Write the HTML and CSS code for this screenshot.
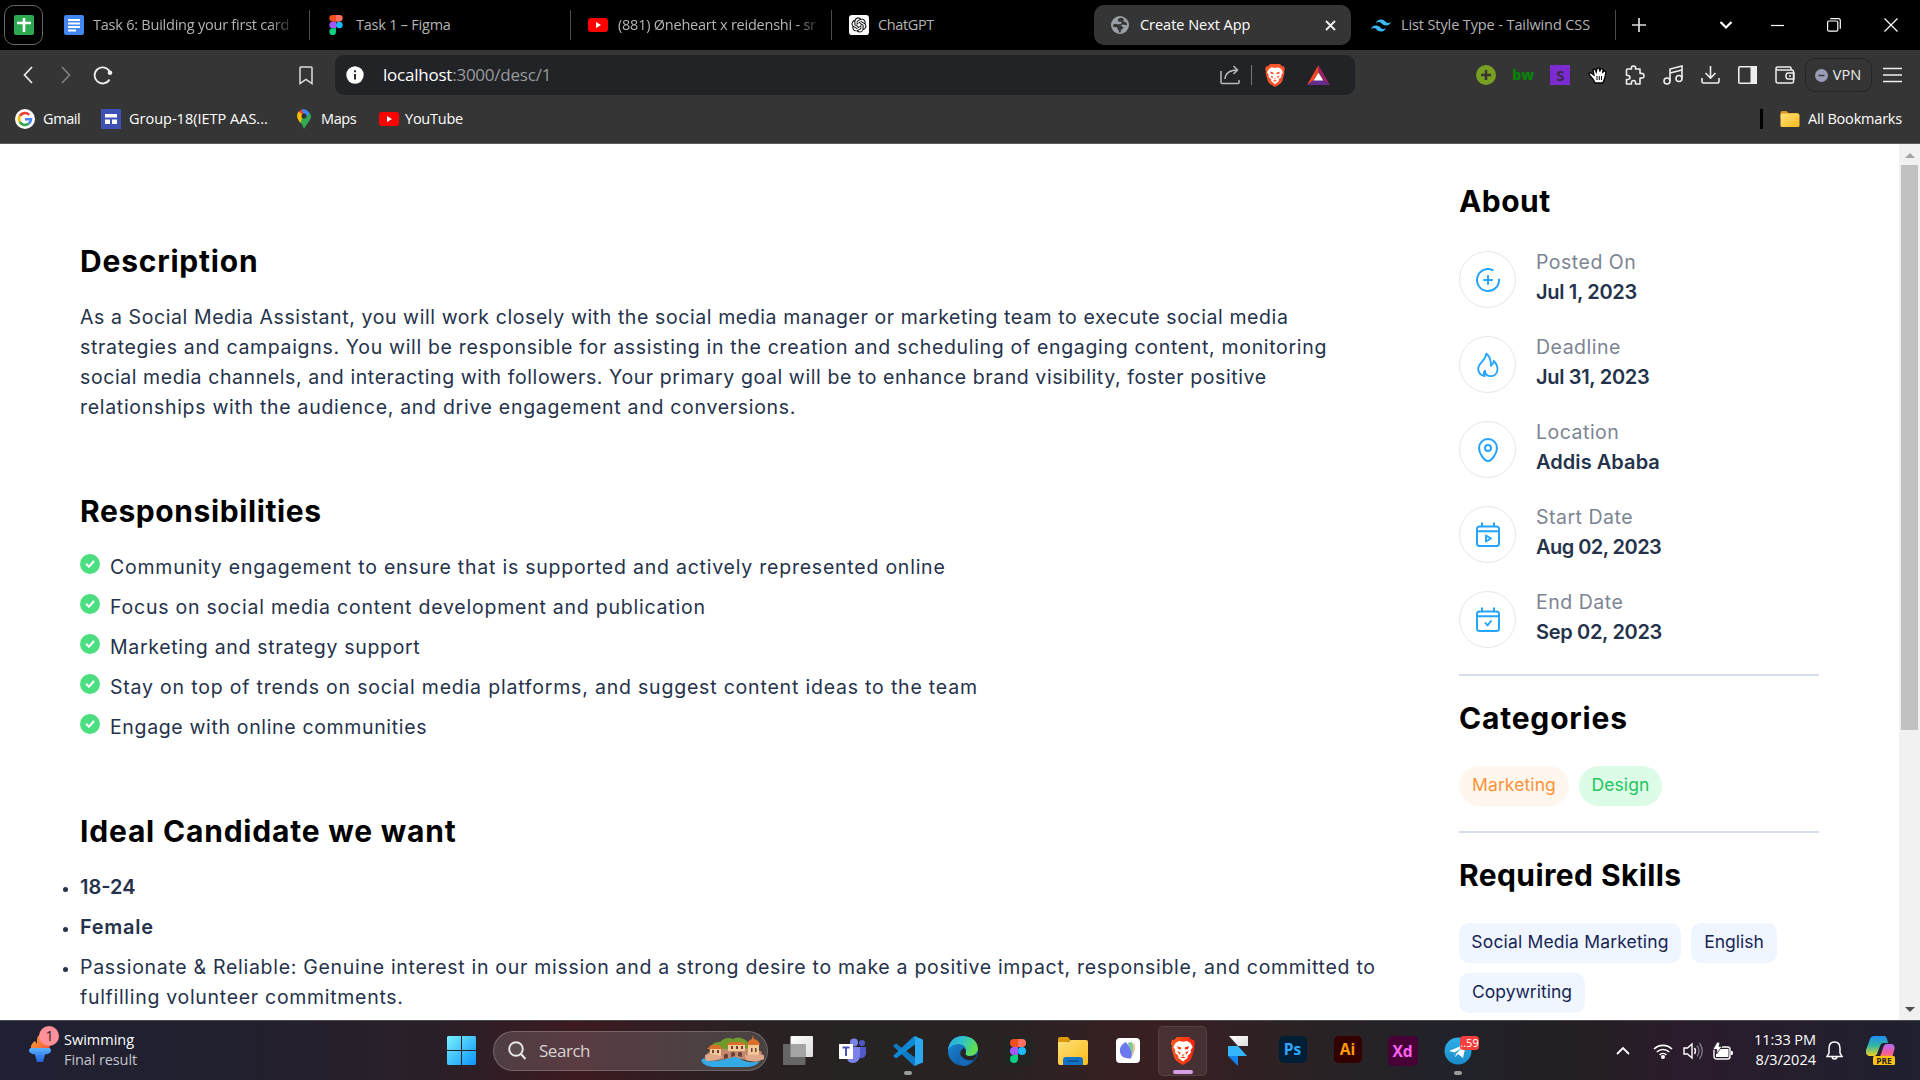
FILE: index.html
```html
<!DOCTYPE html>
<html lang="en">
<head>
<meta charset="utf-8">
<title>Create Next App</title>
<link rel="stylesheet" href="styles.css">
</head>
<body>
<svg class="defs" width="0" height="0" aria-hidden="true">
  <defs>
    <linearGradient id="fire" x1="0" y1="0" x2="1" y2="1"><stop offset="0" stop-color="#ffb52e"/><stop offset="1" stop-color="#f2503f"/></linearGradient>
    <linearGradient id="torch" x1="0" y1="0" x2="0" y2="1"><stop offset="0" stop-color="#5bb4ff"/><stop offset="1" stop-color="#1f5fe0"/></linearGradient>
    <linearGradient id="win" x1="0" y1="0" x2="1" y2="1"><stop offset="0" stop-color="#7af0ff"/><stop offset="1" stop-color="#0a94f8"/></linearGradient>
    <linearGradient id="pane" x1="0" y1="0" x2="1" y2="1"><stop offset="0" stop-color="#fff"/><stop offset="1" stop-color="#dcdcdc"/></linearGradient>
    <linearGradient id="edgeTop" x1="0" y1="0" x2="1" y2="0.4"><stop offset="0" stop-color="#28a8e8"/><stop offset=".5" stop-color="#2fc2c8"/><stop offset="1" stop-color="#5ee04f"/></linearGradient>
    <linearGradient id="edgeLow" x1="0" y1="0" x2="1" y2="1"><stop offset="0" stop-color="#1b8ddb"/><stop offset="1" stop-color="#0c4a94"/></linearGradient>
    <linearGradient id="folder" x1="0" y1="0" x2="1" y2="1"><stop offset="0" stop-color="#ffe07a"/><stop offset="1" stop-color="#fbbc1a"/></linearGradient>
    <linearGradient id="lion" x1="0" y1="0" x2="1" y2="0"><stop offset="0" stop-color="#ff5a1f"/><stop offset="1" stop-color="#f5200f"/></linearGradient>
    <linearGradient id="tele" x1="0" y1="0" x2="0" y2="1"><stop offset="0" stop-color="#2fb0e8"/><stop offset="1" stop-color="#1a8ac8"/></linearGradient>
    <linearGradient id="copA" x1="0" y1="0" x2="0" y2="1"><stop offset="0" stop-color="#1f8cf5"/><stop offset=".5" stop-color="#34b8a0"/><stop offset="1" stop-color="#f2d21f"/></linearGradient>
    <linearGradient id="copB" x1="0" y1="0" x2="0" y2="1"><stop offset="0" stop-color="#b26cf5"/><stop offset=".6" stop-color="#f05aa0"/><stop offset="1" stop-color="#ff8a4a"/></linearGradient>
    <symbol id="brave" viewBox="0 0 24 28">
      <path d="M6 0h12l3 3 2-.3 1 4-1 2.300 .5 2L21 20q-1 3-4 5l-5 3-5-3q-3-2-4-5L.5 11 1 9 0 6.700l1-4L3 3z"/>
      <path fill="#fff" d="M12 4.800l4-.8 3.500 2 2.200 4-2 3 .3 2.500-3.500 3.500 .2 1.800L12 24.500l-4.700-3.700 .2-1.800L4 15.500l.3-2.500-2-3 2.200-4L8 4z"/>
      <path d="M6 9.300l4 .9.300 2.200-3.400-.4zM18 9.300l-4 .9-.3 2.200 3.400-.4zM6.300 14l3.500 1.500-1.300 2.200zM17.700 14l-3.500 1.500 1.300 2.200zM10.200 17.500h3.600L12 18.900zM9 20.600l3-1.100 3 1.100-3 .6z"/>
    </symbol>
    <symbol id="figma" viewBox="0 0 14 21">
      <path fill="#f24e1e" d="M7 0v7H3.500a3.500 3.500 0 0 1 0-7z"/><path fill="#ff7262" d="M7 0h3.500a3.500 3.500 0 0 1 0 7H7z"/>
      <path fill="#a259ff" d="M7 7v7H3.500a3.500 3.500 0 0 1 0-7z"/><circle fill="#1abcfe" cx="10.500" cy="10.500" r="3.500"/><path fill="#0acf83" d="M7 14v3.500A3.500 3.500 0 1 1 3.500 14z"/>
    </symbol>
    <symbol id="youtube" viewBox="0 0 20 14"><rect width="20" height="14" rx="3" fill="#f00"/><path fill="#fff" d="M8 4l5 3-5 3z"/></symbol>
    <symbol id="check" viewBox="0 0 20 20"><circle cx="10" cy="10" r="10" fill="#4bde80"/><path d="M6.500 10.300l2.500 2.500 4.500-5.300" fill="none" stroke="#fff" stroke-width="2" stroke-linecap="round" stroke-linejoin="round"/></symbol>
  </defs>
</svg>

<header class="browser">
  <div class="tabs">
    <div class="pinned"><svg width="20" height="20" viewBox="0 0 20 20"><rect width="20" height="20" rx="2" fill="#2da94f"/><path d="M10 3v14M3 8h14" stroke="#fff" stroke-width="2.600"/></svg></div>
    <div class="tab tab-docs">
      <svg width="20" height="20" viewBox="0 0 20 20"><rect width="20" height="20" rx="2" fill="#4285f4"/><path d="M4 5h12M4 8.500h12M4 12h12M4 15.500h8" stroke="#fff" stroke-width="1.800"/></svg>
      <span class="tab-title fade">Task 6: Building your first card</span>
    </div>
    <div class="tab tab-figma"><svg width="14" height="20"><use href="#figma"/></svg><span class="tab-title">Task 1 – Figma</span></div>
    <div class="tab tab-yt"><svg width="20" height="14"><use href="#youtube"/></svg><span class="tab-title fade">(881) Øneheart x reidenshi - sr</span></div>
    <div class="tab tab-gpt">
      <svg width="20" height="20" viewBox="-4 -4 32 32"><rect x="-4" y="-4" width="32" height="32" rx="5" fill="#fff"/><path d="M22.2819 9.8211a5.9847 5.9847 0 0 0-.5157-4.9108 6.0462 6.0462 0 0 0-6.5098-2.9A6.0651 6.0651 0 0 0 4.9807 4.1818a5.9847 5.9847 0 0 0-3.9977 2.9 6.0462 6.0462 0 0 0 .7427 7.0966 5.98 5.98 0 0 0 .511 4.9107 6.051 6.051 0 0 0 6.5146 2.9001A5.9847 5.9847 0 0 0 13.2599 24a6.0557 6.0557 0 0 0 5.7718-4.2058 5.9894 5.9894 0 0 0 3.9977-2.9001 6.0557 6.0557 0 0 0-.7475-7.0729zm-9.022 12.6081a4.4755 4.4755 0 0 1-2.8764-1.0408l.1419-.0804 4.7783-2.7582a.7948.7948 0 0 0 .3927-.6813v-6.7369l2.02 1.1686a.071.071 0 0 1 .038.052v5.5826a4.504 4.504 0 0 1-4.4945 4.4944zm-9.6607-4.1254a4.4708 4.4708 0 0 1-.5346-3.0137l.142.0852 4.783 2.7582a.7712.7712 0 0 0 .7806 0l5.8428-3.3685v2.3324a.0804.0804 0 0 1-.0332.0615L9.74 19.9502a4.4992 4.4992 0 0 1-6.1408-1.6464zM2.3408 7.8956a4.485 4.485 0 0 1 2.3655-1.9728V11.6a.7664.7664 0 0 0 .3879.6765l5.8144 3.3543-2.0201 1.1685a.0757.0757 0 0 1-.071 0l-4.8303-2.7865A4.504 4.504 0 0 1 2.3408 7.872zm16.5963 3.8558L13.1038 8.364 15.1192 7.2a.0757.0757 0 0 1 .071 0l4.8303 2.7913a4.4944 4.4944 0 0 1-.6765 8.1042v-5.6772a.79.79 0 0 0-.407-.667zm2.0107-3.0231l-.142-.0852-4.7735-2.7818a.7759.7759 0 0 0-.7854 0L9.409 9.2297V6.8974a.0662.0662 0 0 1 .0284-.0615l4.8303-2.7866a4.4992 4.4992 0 0 1 6.6802 4.66zM8.3065 12.863l-2.02-1.1638a.0804.0804 0 0 1-.038-.0567V6.0742a4.4992 4.4992 0 0 1 7.3757-3.4537l-.142.0805L8.704 5.459a.7948.7948 0 0 0-.3927.6813zm1.0976-2.3654l2.602-1.4998 2.6069 1.4998v2.9994l-2.5974 1.4997-2.6067-1.4997Z"/></svg>
      <span class="tab-title tight">ChatGPT</span>
    </div>
    <div class="tab tab-active">
      <svg width="18" height="18" viewBox="0 0 18 18"><circle cx="9" cy="9" r="9" fill="#9aa0a6"/><path fill="#353535" d="M10.500 1.800Q7 2 6.800 4.500q.2 1.500 2.200 1.300l1.700.2q-.2 2-1.500 2.200-1.200.2-2.700 0-2-1.200-4.700.8.200 1.500.8 2.300 2-.5 3.400.2.800.8.800 2.200l1 .3v2.300q1.200.2 2.200 0l-.3-1.500q1-2 2.300-2.300l.5-1.500Q11 10.500 10 9.700q1-1.500 2.500-1.200 1.800.8 3.700.5-.5-2-1.300-3.200-1.500.5-2.500-.8 0-1.200.6-1.800-1.200-1-2.500-1.400z"/></svg>
      <span class="tab-title on">Create Next App</span>
      <svg class="close" width="11" height="11" viewBox="0 0 11 11"><path d="M1 1l9 9M10 1l-9 9" stroke="#eee" stroke-width="1.900"/></svg>
    </div>
    <div class="tab tab-tw">
      <svg width="20" height="13" viewBox="0 4.800 24 14.400"><path fill="#38bdf8" d="M12.001 4.800c-3.200 0-5.200 1.600-6 4.800 1.200-1.600 2.600-2.200 4.200-1.800.913.228 1.565.89 2.288 1.624C13.666 10.618 15.027 12 18.001 12c3.200 0 5.200-1.600 6-4.800-1.200 1.600-2.600 2.200-4.200 1.800-.913-.228-1.565-.89-2.288-1.624C16.337 6.182 14.976 4.800 12.001 4.800zm-6 7.200c-3.200 0-5.200 1.600-6 4.800 1.200-1.600 2.600-2.200 4.200-1.800.913.228 1.565.89 2.288 1.624 1.177 1.194 2.538 2.576 5.512 2.576 3.200 0 5.200-1.600 6-4.800-1.200 1.600-2.600 2.200-4.200 1.800-.913-.228-1.565-.89-2.288-1.624C10.337 13.382 8.976 12 6.001 12z"/></svg>
      <span class="tab-title tw">List Style Type - Tailwind CSS</span>
    </div>
    <svg class="new-tab" width="14" height="14" viewBox="0 0 14 14"><path d="M7 0v14M0 7h14" stroke="#ddd" stroke-width="1.700"/></svg>
    <svg class="tab-menu" width="14" height="10" viewBox="0 0 14 10"><path d="M1.500 2L7 7.500 12.500 2" fill="none" stroke="#fff" stroke-width="2.200"/></svg>
    <svg class="win-min" width="13" height="13" viewBox="0 0 13 13"><path d="M0 6.500h13" stroke="#fff" stroke-width="1.200"/></svg>
    <svg class="win-max" width="14" height="14" viewBox="0 0 14 14" fill="none" stroke="#fff" stroke-width="1.200"><rect x=".6" y="3" width="10.200" height="10.200" rx="1.500"/><path d="M3.300 .7h8q2 0 2 2v8"/></svg>
    <svg class="win-close" width="14" height="14" viewBox="0 0 14 14"><path d="M.5 .5l13 13M13.500 .5l-13 13" stroke="#fff" stroke-width="1.200"/></svg>
  </div>

  <div class="toolbar">
    <svg class="nav-back" width="10" height="18" viewBox="0 0 10 18"><path d="M9 1L1.500 9 9 17" fill="none" stroke="#eee" stroke-width="1.700"/></svg>
    <svg class="nav-fwd" width="10" height="18" viewBox="0 0 10 18"><path d="M1 1l7.500 8L1 17" fill="none" stroke="#858585" stroke-width="1.500"/></svg>
    <svg class="nav-reload" width="20" height="19" viewBox="0 0 20 19"><path d="M16.500 13.500A8 8 0 1 1 16.800 6" fill="none" stroke="#eee" stroke-width="1.800"/><circle cx="17" cy="6.800" r="2.300" fill="#eee"/></svg>
    <svg class="nav-mark" width="14" height="19" viewBox="0 0 14 19"><path d="M1 1.800q0-.8.800-.8h10.400q.8 0 .8.800V17.500l-6-4.200-6 4.200z" fill="none" stroke="#ddd" stroke-width="1.500"/></svg>
    <div class="urlbar">
      <svg width="18" height="18" viewBox="0 0 18 18"><circle cx="9" cy="9" r="8.700" fill="#fff"/><path d="M9 8v5.500M9 4.300v2" stroke="#222327" stroke-width="1.900"/></svg>
      <span class="url"><b>localhost</b>:3000/desc/1</span>
      <svg class="share" width="20" height="20" viewBox="0 0 20 20" fill="none" stroke="#bbb" stroke-width="1.500"><path d="M1 6v11.500q0 1 1 1h16q1 0 1-1V15M5 14q.5-8.500 12-9M13.500 1l4 4-4 4"/></svg>
      <i class="url-sep"></i>
      <svg class="url-lion" width="20" height="23" fill="#fb542b"><use href="#brave"/></svg>
      <svg class="url-bat" width="23" height="20" viewBox="0 0 23 20"><path fill="#ff4724" d="M11.500 0L0 20l7-5 4.500-8z"/><path fill="#9e1f63" d="M11.500 0L23 20l-7-5-4.500-8z"/><path fill="#662d91" d="M0 20h23l-7-5H7z"/><path fill="#fff" d="M11.500 7.500l4.800 8H6.700z"/></svg>
    </div>
    <div class="extensions">
      <span><svg width="20" height="20" viewBox="0 0 20 20"><circle cx="10" cy="10" r="10" fill="#799f22"/><path d="M10 5v10M5 10h10" stroke="#353535" stroke-width="2.500"/></svg></span>
      <span class="bw">bw</span>
      <span><em class="s-box">S</em></span>
      <span><svg width="20" height="17" viewBox="0 0 20 17"><path fill="#fff" stroke="#000" stroke-width="1.300" d="M7 16l-2-4-4-4.500Q.8 5.500 3 6l3 2-1-5q1.300-1.600 2.400 0l.8 2L9 1.500q1.600-1.300 2.400.3l.4 2.700 1-2.700q1.600-.8 2.200.8l-.2 2.600 1.400-1.200q1.700 0 1.600 1.600l-1 5.400-2 5z"/><path d="M9 9v4M11.300 9v4M13.500 9v4" stroke="#000"/></svg></span>
      <span><svg width="20" height="20" viewBox="0 0 20 20"><path d="M2 4h4.500q-.7-3 2-3t2 3H15v4.500q4-.7 4 2.300t-4 2.200V19h-4.500q.5-3.500-2-3.500T6.500 19H1.500v-4.500q3.500.3 3.500-2t-3.500-2.300V5z" fill="none" stroke="#eee" stroke-width="1.600" stroke-linejoin="round"/></svg></span>
      <span><svg width="20" height="20" viewBox="0 0 20 20" fill="none" stroke="#eee" stroke-width="1.600"><path d="M7 16V4l12-3v12.500M7 8l12-3"/><circle cx="4" cy="16" r="3"/><circle cx="16" cy="13.500" r="3"/></svg></span>
      <span><svg width="19" height="18" viewBox="0 0 19 18" fill="none" stroke="#eee" stroke-width="1.600"><path d="M9.500 0v12M4.500 7l5 5 5-5M1 12v3.500q0 1.500 1.500 1.500h14q1.500 0 1.500-1.500V12"/></svg></span>
      <span><svg width="19" height="18" viewBox="0 0 19 18"><rect x=".8" y=".8" width="17.400" height="16.400" rx="1" fill="none" stroke="#eee" stroke-width="1.600"/><path fill="#eee" d="M12.500 0H19v18h-6.500z"/></svg></span>
      <span><svg width="20" height="18" viewBox="0 0 20 18" fill="none" stroke="#eee" stroke-width="1.500"><path d="M16 4V2q0-1-1-1H3Q1 1 1 2.500T3 4h14q1.500 0 1.500 1.500V16q0 1-1.500 1H3q-2 0-2-2V2.500M19 7h-6q-2 0-2 3t2 3h6zM14 10h2"/></svg></span>
    </div>
    <div class="vpn"><svg width="13" height="13" viewBox="0 0 13 13"><circle cx="6.500" cy="6.500" r="6.500" fill="#9a9db5"/><path d="M3.500 6.500h6" stroke="#353535" stroke-width="1.400"/></svg>VPN</div>
    <svg class="menu" width="19" height="16" viewBox="0 0 19 16"><path d="M0 1.500h19M0 8h19M0 14.500h19" stroke="#eee" stroke-width="1.600"/></svg>
  </div>

  <div class="bookmarks">
    <svg class="bm-gmail" width="20" height="20" viewBox="0 0 20 20"><circle cx="10" cy="10" r="10" fill="#fff"/><g fill="none" stroke-width="2.600"><path stroke="#ea4335" d="M14.200 5.800A6 6 0 0 0 4.800 7"/><path stroke="#fbbc05" d="M4.800 7a6 6 0 0 0 0 6"/><path stroke="#34a853" d="M4.800 13a6 6 0 0 0 9 1.600"/><path stroke="#4285f4" d="M13.800 14.600A6 6 0 0 0 16 10.200h-6"/></g></svg>
    <span class="bm-t1">Gmail</span>
    <svg class="bm-group" width="20" height="20" viewBox="0 0 20 20"><path fill="#3f51b5" d="M0 0h20v20H0z"/><path fill="#fff" d="M4 5h12v3.500H4zM4 10.500h5V15H4zM11 10.500h5V15h-5z"/></svg>
    <span class="bm-t2">Group-18(IETP AAS...</span>
    <svg class="bm-maps" width="14" height="20" viewBox="0 0 14 20"><path fill="#34a853" d="M1.500 11L12.700 4q1.300 2 1.300 4-.5 3-3.500 6.500Q8.500 17 7 20 6 17 4.500 15z"/><path fill="#4285f4" d="M4.500 .5Q9 -1 12.700 4L8 9z"/><path fill="#ea4335" d="M1.800 2.500L4.500 .5 7 5 3 8.500z"/><path fill="#fbbc04" d="M1.800 2.500L6 6 3.500 14Q0 9.500 0 7q0-3 1.800-4.500z"/><circle cx="7" cy="7" r="2.500" fill="#2b3137"/></svg>
    <span class="bm-t3">Maps</span>
    <svg class="bm-yt" width="20" height="14"><use href="#youtube"/></svg>
    <span class="bm-t4">YouTube</span>
    <i class="bm-sep"></i>
    <svg class="bm-folder" width="20" height="16" viewBox="0 0 20 16"><path fill="#d9981c" d="M.5 1.500Q.5 0 2 0h4.500L8.500 2H18v5H.5z"/><rect x=".5" y="2.500" width="19" height="13.500" rx="1.500" fill="url(#folder)"/></svg>
    <span class="bm-t5">All Bookmarks</span>
  </div>
</header>

<div class="viewport">
  <main class="content">
    <h2>Description</h2>
    <p>
      <span class="ls-58">As a Social Media Assistant, you will work closely with the social media manager or marketing team to execute social media</span><br>
      <span class="ls-68">strategies and campaigns. You will be responsible for assisting in the creation and scheduling of engaging content, monitoring</span><br>
      <span class="ls-58">social media channels, and interacting with followers. Your primary goal will be to enhance brand visibility, foster positive</span><br>
      <span class="ls-70">relationships with the audience, and drive engagement and conversions.</span>
    </p>
    <h2 class="resp">Responsibilities</h2>
    <ul class="checks">
      <li><svg width="20" height="20"><use href="#check"/></svg><span class="ls-76">Community engagement to ensure that is supported and actively represented online</span></li>
      <li><svg width="20" height="20"><use href="#check"/></svg><span class="ls-76">Focus on social media content development and publication</span></li>
      <li><svg width="20" height="20"><use href="#check"/></svg><span class="ls-68">Marketing and strategy support</span></li>
      <li><svg width="20" height="20"><use href="#check"/></svg><span class="ls-79">Stay on top of trends on social media platforms, and suggest content ideas to the team</span></li>
      <li><svg width="20" height="20"><use href="#check"/></svg><span class="ls-62">Engage with online communities</span></li>
    </ul>
    <h2 class="ideal">Ideal Candidate we want</h2>
    <ul class="bullets">
      <li><strong class="range">18-24</strong></li>
      <li><strong>Female</strong></li>
      <li><span class="ls-70">Passionate &amp; Reliable: Genuine interest in our mission and a strong desire to make a positive impact, responsible, and committed to<br>fulfilling volunteer commitments.</span></li>
    </ul>
  </main>

  <aside class="sidebar">
    <h2 class="snug">About</h2>
    <dl class="facts">
      <div><i class="ring"><svg viewBox="0 0 24 24"><path d="M16.500 2A11 11 0 1 0 23 11.500"/><path d="M12 8v8M8 12h8"/></svg></i><div><dt>Posted On</dt><dd>Jul 1, 2023</dd></div></div>
      <div><i class="ring"><svg viewBox="0 0 24 28"><path d="M8.500 26C4 25.200 1.500 21.700 1.500 17.700c0-6 8.500-8.500 8.500-16 3.500 2.500 5.500 6 5 13.300 2.200-1.300 3-3.300 3.200-5.300 3 3 4.300 6.500 4 9.800-.5 4.200-4 6.700-8 6.500-3.500-.3-5.500-2.800-5.500-6-1.500 2-1.200 4.500-.2 6z"/></svg></i><div><dt>Deadline</dt><dd>Jul 31, 2023</dd></div></div>
      <div><i class="ring"><svg viewBox="0 0 24 24"><path d="M12 23c-3.500 0-9-7.500-9-13a9 9 0 0 1 18 0c0 5.500-5.500 13-9 13z"/><circle cx="12" cy="10" r="3"/></svg></i><div><dt>Location</dt><dd class="plain">Addis Ababa</dd></div></div>
      <div><i class="ring"><svg viewBox="0 0 24 24"><rect x="1" y="3.500" width="22" height="19.500" rx="2.500"/><path d="M1 8.300h22M6 .2v3M18 .2v3M10 12.500v6l5-3z"/></svg></i><div><dt>Start Date</dt><dd class="date">Aug 02, 2023</dd></div></div>
      <div><i class="ring"><svg viewBox="0 0 24 24"><rect x="1" y="3.500" width="22" height="19.500" rx="2.500"/><path d="M1 8.300h22M6 .2v3M18 .2v3M9.500 15l2 2.500 3.500-4.500"/></svg></i><div><dt>End Date</dt><dd>Sep 02, 2023</dd></div></div>
    </dl>
    <hr>
    <h2>Categories</h2>
    <div class="pills">
      <span class="cat orange">Marketing</span><span class="cat green">Design</span>
    </div>
    <hr>
    <h2 class="skills">Required Skills</h2>
    <div class="pills">
      <span class="skill smm">Social Media Marketing</span><span class="skill eng">English</span><span class="skill copy">Copywriting</span>
    </div>
  </aside>

  <div class="scrollbar"><i class="arrow up"></i><i class="thumb"></i><i class="arrow down"></i></div>
</div>

<footer class="taskbar">
  <div class="news">
    <svg width="30" height="38" viewBox="0 0 30 38"><path fill="url(#fire)" d="M2 24q-1-6 4-9l2 3Q7 9 14 6q0 5 4 8 4 4 2 10z"/><path fill="url(#torch)" d="M0 24.500q0-2.500 2-2.500h18q2 0 2 2.500 0 3-6 4l-2 7.500H8l-2-7.500q-6-1-6-4z"/><circle cx="20" cy="10" r="10" fill="#ff8f99"/><text x="20.500" y="15" text-anchor="middle" font-family="Open Sans, sans-serif" font-size="14" fill="#222">1</text></svg>
    <div><b>Swimming</b><span>Final result</span></div>
  </div>
  <svg class="start" width="29" height="29" viewBox="0 0 29 29"><path fill="url(#win)" d="M1 0h13v14H0V1zM15 0h13l1 1v13H15zM0 15h14v14H1l-1-1zM15 15h14v13l-1 1H15z"/></svg>
  <div class="search">
    <svg width="18" height="19" viewBox="0 0 18 19"><circle cx="8" cy="8" r="6.800" fill="#5b4c50" stroke="#e8e8e8" stroke-width="1.900"/><path d="M13 13l4.500 5" stroke="#e8e8e8" stroke-width="2.200"/></svg>
    <span>Search</span>
    <svg class="village" width="63" height="32" viewBox="0 0 63 32"><path fill="#6f9b2d" d="M8 14q4-8 11-7 6-6 13-3 6-4 14 2l4 9H8z"/><path fill="#c08a6c" d="M4 21l6-6 14-1 14-2 22 4 3 8-8 3-20-4-17 2-15 2z"/><path fill="#f3c998" d="M9 12h11v9H9zM27 9h17v7H27zM47 10h11v10H47z"/><path fill="#d8702c" d="M6 14l4-4h8l4 4zM25 10l4-3h12l4 3zM46 10q1-5 5-6l1-4 1 4q5 1 6 6z"/><path fill="#6d3f3a" d="M23 24v-4q2-3 4 0v3zM30 22v-4q2-2 4 0v3zM37 21v-3q2-2 4 0v4zM11 15h2v3h-2zM16 15h2v3h-2zM30 11h2v3h-2zM35 11h2v3h-2zM40 11h2v3h-2zM50 13h1.500v4H50zM54 13h1.500v4H54z"/><path fill="#35a9e5" d="M0 25l3-2q3 4 9 3 12-1 20-4 6 0 9 3 9 4 18 1-4 6-15 6H12Q2 31 0 25z"/><path fill="#e0a98c" d="M4 20q6-2 12 0l6 2q-6 4-17 4zM44 20q9-1 19 0v4q-9 4-18 1z"/></svg>
  </div>
  <div class="apps">
    <span><svg width="30" height="29" viewBox="0 0 30 29"><rect x="7.500" width="22.500" height="21" rx="1" fill="url(#pane)"/><rect y="8" width="22.500" height="21" rx="1" fill="#666"/><path fill="#a5a5a5" d="M7.500 8h15v13h-15z"/></svg></span>
    <span><svg width="28" height="26" viewBox="0 0 28 26"><circle cx="15" cy="4.500" r="4" fill="#7b83eb"/><circle cx="23" cy="5" r="3" fill="#5059c9"/><path fill="#5059c9" d="M17 9h10v7q-1 5-7 4z"/><path fill="#7b83eb" d="M8 9h13v9q-1 7-7 7t-6-6z"/><path fill="#fff" d="M0 6h14v15H0z"/><path d="M3.500 9.500h7M7 9.500v8.500" stroke="#4b53bc" stroke-width="2"/></svg></span>
    <span class="running"><svg width="30" height="30" viewBox="0 0 30 30"><path fill="#0f7ac4" d="M0 10l3-2.500L24 23v6.500L20 29z"/><path fill="#1188d4" d="M0 20l3 2.500L24 7V.5L20 1z"/><path fill="#2aa9f2" d="M21 0l9 3.500v23L21 30l1-3V3z"/></svg></span>
    <span><svg width="30" height="30" viewBox="0 0 30 30"><circle cx="15" cy="15" r="15" fill="url(#edgeLow)"/><path fill="url(#edgeTop)" d="M0 14Q2 0 15 0q14 1 15 13-1 7-9 7-5-.5-3-4 1-7-7-8Q3 8 0 14z"/><path fill="#262324" d="M18 16q-2 3.500 3 4.200 4 .3 8-2-1 3.500-4 6-9 1-12.500-5Q11.500 14 16 12q2 1.500 2 4z"/><path fill="#1569b8" d="M12.500 19q3 6.500 12.500 5.500-5 5.500-10 5.500-6-3-2.500-11z"/></svg></span>
    <span><i class="figtile"><svg width="16" height="24"><use href="#figma"/></svg></i></span>
    <span><svg width="30" height="28" viewBox="0 0 30 28"><path fill="#dc9a06" d="M0 2q0-2 2-2h8l3 4h-3v6H0z"/><path fill="url(#folder)" d="M0 5h10l3-2h15q2 0 2 2v21q0 2-2 2H2q-2 0-2-2z"/><path fill="#1372c4" d="M5 28v-5q0-3 3-3h14q3 0 3 3v5z"/><path d="M9 24h12" stroke="#0c4f8e" stroke-width="1.500"/></svg></span>
    <span><svg width="24" height="25" viewBox="0 0 24 25"><rect width="24" height="25" rx="4" fill="#fff"/><path fill="#f5c9a0" d="M15 20q6-8 3.500-15-1 0-2 1z"/><path fill="#7cc79b" d="M14 20q5-9 2-16-2.500 0-4 1z"/><path fill="#6b78f0" d="M10 4q-7 3-6 10 1 7 11 6.500Q18 15 10 4z"/></svg></span>
    <span class="current"><svg width="24" height="30" fill="url(#lion)"><use href="#brave"/></svg></span>
    <span><svg width="20" height="30" viewBox="0 0 20 30"><path fill="url(#pane)" d="M1 0h19v10H10z"/><path fill="#35b5fb" d="M0 10h10l9 10H0z"/><path fill="#1085f0" d="M0 20h10v10z"/></svg></span>
    <span><i class="adobe ps">Ps</i></span>
    <span><i class="adobe ai">Ai</i></span>
    <span><i class="adobe xd">Xd</i></span>
    <span class="running telegram"><svg width="36" height="32" viewBox="0 0 36 32"><circle cx="15" cy="18" r="13.500" fill="url(#tele)"/><path fill="#fff" d="M6 18l17-7-3 14-5-4-3 3-.5-4.500zM11.500 19.500l1 4.500.6-3.200 6-6z"/><rect x="17" y="3" width="19" height="14" rx="3.500" fill="#f3403c"/><text x="26.500" y="14" text-anchor="middle" font-family="Open Sans, sans-serif" font-size="11" fill="#fff">..59</text></svg></span>
  </div>
  <svg class="tray-up" width="14" height="9" viewBox="0 0 14 9"><path d="M1 8l6-6 6 6" fill="none" stroke="#fff" stroke-width="1.800"/></svg>
  <svg class="wifi" width="20" height="16" viewBox="0 0 20 16" fill="none" stroke="#fff" stroke-width="1.600"><path d="M1 6a13 13 0 0 1 18 0M3.800 9a9 9 0 0 1 12.400 0M6.600 11.800a5 5 0 0 1 6.800 0"/><circle cx="10" cy="14" r="1.200" fill="#fff"/></svg>
  <svg class="sound" width="20" height="18" viewBox="0 0 20 18" fill="none" stroke="#fff" stroke-width="1.400"><path d="M1 6h3.500L9 2v14l-4.500-4H1zM11.500 6q2 3 0 6"/><path d="M14 3.500q4 5.500 0 11M16.500 1q5.500 8 0 16" stroke="#7a7480"/></svg>
  <svg class="battery" width="20" height="18" viewBox="0 0 20 18"><rect x="1" y="5" width="16" height="12" rx="2.500" fill="none" stroke="#fff" stroke-width="1.400"/><path fill="#fff" d="M7 7h8.500v8H3v-3zM18 9h1.200q.8 0 .8 2t-.8 2H18z"/><path fill="#fff" stroke="#271d2b" stroke-width=".8" d="M4 0l3 .5L6 4.500h3L3.500 12l.3-4.500H0z"/></svg>
  <div class="clock"><span class="time">11:33 PM</span><span>8/3/2024</span></div>
  <svg class="bell" width="17" height="19" viewBox="0 0 17 19" fill="none" stroke="#fff" stroke-width="1.500"><path d="M3 12V7.500Q3 1 8.500 1T14 7.500V12l2 3.500H1zM6 16q.5 2 2.500 2t2.500-2"/></svg>
  <svg class="copilot" width="29" height="29" viewBox="0 0 29 29"><path fill="url(#copA)" d="M8 0h11q2 1 3 7h-5q-2 0-3 3l-3 8q-1 2-3 2H3q-4-1-3-6L4 3q1-3 4-3z"/><path fill="url(#copB)" d="M21 8h5q3 1 2.500 5L26 22H10q4 0 5-4l2-6q1-4 4-4z"/><rect x="7" y="20" width="22" height="9" rx="1.500" fill="#ffc20f"/><text x="18" y="27.600" text-anchor="middle" font-family="Open Sans, sans-serif" font-size="8.500" font-weight="700" fill="#222">PRE</text></svg>
</footer>
</body>
</html>
```
FILE: styles.css
```css
* { box-sizing: border-box; }
body { margin: 0; width: 1920px; height: 1080px; overflow: hidden; display: flex; flex-direction: column; background: #fff; font-family: Inter, sans-serif; }
.defs { position: absolute; }
svg { display: block; flex: none; }
i, em { font-style: normal; }
h2, p, ul, dl, dd { margin: 0; padding: 0; }
ul { list-style: none; }

/* Browser chrome */
.browser { height: 144px; background: #353535; border-bottom: 1px solid #5c5c5c; font: 14.5px/20px "Open Sans", sans-serif; color: #fff; white-space: nowrap; flex: none; }
.tabs { height: 50px; background: #000; display: flex; align-items: center; }
.pinned { margin-left: 4px; width: 39px; height: 40px; border: 1px solid #666; border-radius: 10px; display: flex; align-items: center; justify-content: center; flex: none; }
.tab { height: 30px; display: flex; align-items: center; flex: none; border-right: 1px solid #4c4c4c; }
.tab-title { color: #b4b4b4; letter-spacing: -.23px; overflow: hidden; }
.tab-title.tight { letter-spacing: -.36px; }
.tab-title.on { color: #fff; letter-spacing: -.03px; }
.tab-title.tw { letter-spacing: -.11px; }
.fade { -webkit-mask-image: linear-gradient(90deg, #000 90%, rgba(0,0,0,.25)); mask-image: linear-gradient(90deg, #000 90%, rgba(0,0,0,.25)); }
.tab-docs { width: 267px; padding-left: 21px; gap: 9px; }
.tab-figma { width: 261px; padding-left: 19px; gap: 13px; }
.tab-yt { width: 261px; padding-left: 17px; gap: 10px; }
.tab-gpt { width: 262px; padding-left: 17px; gap: 9px; border: 0; }
.tab-active { width: 257px; height: 40px; border: 0; border-radius: 10px; background: #353535; padding: 0 15px 0 17px; gap: 11px; }
.close { margin-left: auto; }
.tab-tw { width: 265px; padding-left: 20px; gap: 10px; }
.new-tab { margin-left: 16px; }
.tab-menu { margin-left: 73px; }
.win-min { margin-left: 38px; }
.win-max { margin-left: 43px; }
.win-close { margin-left: 43px; }

.toolbar { height: 50px; display: flex; align-items: center; }
.nav-back { margin-left: 23px; }
.nav-fwd { margin-left: 28px; }
.nav-reload { margin-left: 22px; }
.nav-mark { margin-left: 186px; }
.urlbar { margin-left: 22px; width: 1020px; height: 40px; border-radius: 9px; background: #222327; display: flex; align-items: center; padding-left: 11px; flex: none; }
.url { margin-left: 19px; width: 837px; font-size: 17px; letter-spacing: -.23px; color: #999a9c; }
.url b { font-weight: 400; color: #fff; }
.url-sep { margin-left: 11px; width: 1px; height: 20px; background: #777; }
.url-lion { margin-left: 13px; }
.url-bat { margin-left: 22px; }
.extensions { margin-left: 112px; display: grid; grid-template-columns: repeat(9, 37.4px); flex: none; }
.extensions span { display: flex; align-items: center; justify-content: center; }
.bw { color: #0a820a; font-size: 14px; font-weight: 800; }
.s-box { width: 20px; height: 20px; background: #7b2bd0; color: #3a2a4a; font-weight: 700; font-size: 15px; text-align: center; }
.vpn { margin-left: 1px; width: 67px; height: 34px; border: 1px solid #242424; border-radius: 10px; display: flex; align-items: center; justify-content: center; gap: 5px; color: #eee; flex: none; }
.menu { margin-left: 11px; }

.bookmarks { height: 38px; display: flex; align-items: center; }
.bm-gmail { margin-left: 15px; }
.bm-t1 { margin-left: 8px; width: 38px; letter-spacing: -.4px; }
.bm-group { margin-left: 20px; }
.bm-t2 { margin-left: 8px; width: 140px; }
.bm-maps { margin-left: 28px; }
.bm-t3 { margin-left: 10px; width: 36px; letter-spacing: -.4px; }
.bm-yt { margin-left: 22px; }
.bm-t4 { margin-left: 6px; letter-spacing: -.23px; }
.bm-sep { margin-left: auto; width: 3px; height: 20px; background: #000; }
.bm-folder { margin-left: 17px; }
.bm-t5 { margin: 0 18px 0 8px; letter-spacing: -.2px; }

/* Page */
.viewport { height: 876px; flex: none; display: flex; overflow: hidden; }
.content { width: 1459px; padding: 97px 0 0 80px; color: #25324b; font-size: 19.5px; line-height: 30px; white-space: nowrap; flex: none; }
h2 { font-size: 30px; line-height: 40px; font-weight: 700; color: #000; letter-spacing: .8px; }
h2.snug { letter-spacing: .45px; }
h2.skills { letter-spacing: .4px; }
h2.ideal { letter-spacing: .8px; }
h2.resp { letter-spacing: .6px; }
.content h2 { margin-bottom: 21px; }
.content h2 + * + h2 { margin-top: 69px; }
.ls-58 { letter-spacing: .587px; }
.ls-62 { letter-spacing: .65px; }
.ls-68 { letter-spacing: .676px; }
.ls-70 { letter-spacing: .7px; }
.ls-76 { letter-spacing: .77px; }
.ls-79 { letter-spacing: .8px; }
.checks, .bullets { display: flex; flex-direction: column; gap: 10px; }
.checks li { display: flex; gap: 10px; }
.checks svg { margin-top: 2px; }
.bullets { margin-left: -17px; }
.bullets li { display: flex; gap: 12px; }
.bullets li::before { content: ""; width: 5px; height: 5px; margin-top: 15px; border-radius: 50%; background: #25324b; }
.bullets strong { font-size: 20px; font-weight: 600; letter-spacing: .7px; }
.bullets .range { letter-spacing: 0; }

.sidebar { width: 440px; padding: 37px 80px 0 0; flex: none; }
.facts { margin: 26px 0; display: flex; flex-direction: column; gap: 24px; font-size: 19.5px; line-height: 30px; }
.facts > div { display: flex; gap: 20px; }
.ring { width: 57px; height: 57px; margin-top: 4px; border: 1px solid #e5e7eb; border-radius: 50%; display: flex; align-items: center; justify-content: center; }
.ring svg { width: 24px; height: 26px; fill: none; stroke: #26a4ff; stroke-width: 2; stroke-linecap: round; stroke-linejoin: round; }
dt { color: #7c8493; letter-spacing: .5px; }
dd { color: #25324b; font-size: 20px; font-weight: 600; letter-spacing: -.32px; }
dd.plain { letter-spacing: .05px; }
dd.date { letter-spacing: -.55px; }
hr { border: 0; height: 2px; width: 360px; margin: 0 0 22px; background: #d6ddeb; }
.pills { display: flex; flex-wrap: wrap; gap: 10px; margin: 28px 0 25px; font-size: 17.5px; line-height: 38px; }
.pills span { height: 40px; text-align: center; }
.cat { border-radius: 20px; letter-spacing: .1px; }
.orange { width: 110px; background: #fff7ed; color: #fb923c; }
.green { width: 83px; background: #dcfce7; color: #22c55e; }
.skill { border-radius: 10px; background: #eff6ff; color: #172554; }
.smm { width: 222px; letter-spacing: .17px; }
.eng { width: 86px; }
.copy { width: 126px; }

.scrollbar { width: 21px; background: #f1f1f1; display: flex; flex-direction: column; align-items: center; flex: none; }
.thumb { width: 17px; height: 565px; margin-top: 7px; background: #c1c1c1; }
.arrow { width: 0; height: 0; border: 5px solid transparent; flex: none; }
.up { margin-top: 4px; border-bottom-color: #a3a3a3; }
.down { margin: auto 0 3px; border-top-color: #505050; }

/* Taskbar */
.taskbar { height: 60px; border-top: 1px solid #4a4a50; display: flex; align-items: center; font: 14.5px/20px "Open Sans", sans-serif; color: #fff; white-space: nowrap; flex: none;
  background: linear-gradient(90deg, #202033 0, #20202f 200px, #2a1f28 440px, #3c1a20 575px, #2d2022 710px, #262322 850px, #292222 1000px, #3a1f22 1160px, #2a2224 1300px, #21222a 1450px, #231f22 1570px, #2a1c2b 1680px, #251e2d 1800px, #1f2030 1920px); }
.news { margin: -2px 0 0 29px; width: 418px; display: flex; gap: 5px; flex: none; }
.news svg { margin-top: -4px; }
.news div { display: flex; flex-direction: column; }
.news b { font-weight: 400; }
.news span { color: #c4c4c9; letter-spacing: -.1px; }
.search { margin-left: 17px; width: 275px; height: 40px; border: 1px solid rgba(255,255,255,.2); border-radius: 20px; background: rgba(255,255,255,.15); display: flex; align-items: center; flex: none; }
.search > svg:first-child { margin-left: 14px; }
.search span { margin-left: 13px; font-size: 17px; letter-spacing: -.47px; color: #d8d2d3; }
.village { margin-left: auto; margin-right: 3px; }
.apps { margin-left: 2px; height: 50px; display: grid; grid-template-columns: repeat(13, 55px); flex: none; }
.apps span { display: flex; align-items: center; justify-content: center; position: relative; }
.running::after, .current::after { content: ""; position: absolute; bottom: 1px; width: 8px; height: 4px; border-radius: 2px; background: #9a9a9a; }
.current::after { width: 20px; background: #d8a0e4; }
.current { margin: 0 3px; border-radius: 5px; background: rgba(255,255,255,.08); border: 1px solid rgba(255,255,255,.08); }
.telegram svg { margin-left: 6px; margin-top: -4px; }
.figtile { width: 30px; height: 30px; border-radius: 4px; background: #222524; display: flex; align-items: center; justify-content: center; }
.adobe { width: 28px; height: 27px; border-radius: 5px; font: 700 15.5px/26px "Open Sans", sans-serif; text-align: center; margin-bottom: 3px; }
.ps { background: #001e36; color: #31a8ff; }
.ai { background: #330000; color: #ff9a00; }
.xd { width: 30px; height: 30px; line-height: 30px; margin-bottom: 0; background: #470137; color: #ff61f6; }
.tray-up { margin-left: 131px; }
.wifi { margin-left: 23px; }
.sound { margin-left: 10px; }
.battery { margin-left: 10px; }
.clock { width: 83px; margin-top: -1px; display: flex; flex-direction: column; text-align: right; }
.time { letter-spacing: -.06px; }
.bell { margin-left: 10px; }
.copilot { margin-left: 23px; }
```
